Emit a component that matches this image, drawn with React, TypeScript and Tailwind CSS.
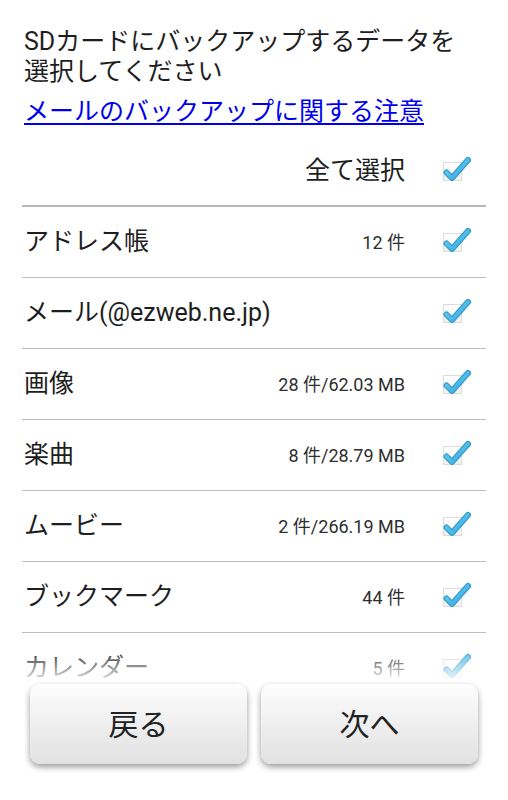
import React from 'react';

type Item = { label: string; count?: string };

const items: Item[] = [
  { label: 'アドレス帳', count: '12 件' },
  { label: 'メール(@ezweb.ne.jp)' },
  { label: '画像', count: '28 件/62.03 MB' },
  { label: '楽曲', count: '8 件/28.79 MB' },
  { label: 'ムービー', count: '2 件/266.19 MB' },
  { label: 'ブックマーク', count: '44 件' },
  { label: 'カレンダー', count: '5 件' },
];

// holo style checked box
const CheckBox: React.FC = () => (
  <svg width="36" height="32" viewBox="0 0 36 32" className="shrink-0">
    <defs>
      <linearGradient id="boxFill" x1="0" y1="0" x2="0" y2="1">
        <stop offset="0" stopColor="#ffffff" />
        <stop offset="1" stopColor="#f1f1f1" />
      </linearGradient>
      <linearGradient id="tick" x1="0" y1="0" x2="1" y2="1">
        <stop offset="0" stopColor="#72d2f4" />
        <stop offset="1" stopColor="#2ea6dc" />
      </linearGradient>
    </defs>
    <rect x="7.5" y="7.5" width="18" height="18" fill="url(#boxFill)" stroke="#dcdcdc" strokeWidth="1" />
    <path d="M10.5 17.5 L16 23 L32 5" fill="none" stroke="#1d8fc4" strokeWidth="6" strokeLinecap="round" strokeLinejoin="round" opacity="0.9" />
    <path d="M10.5 17.5 L16 23 L32 5" fill="none" stroke="url(#tick)" strokeWidth="3.6" strokeLinecap="round" strokeLinejoin="round" />
  </svg>
);

export default function App() {
  return (
    <div
      className="relative w-[508px] h-[800px] overflow-hidden bg-white text-[#1e1e1e]"
      style={{ fontFamily: 'Roboto, "Noto Sans CJK JP", sans-serif' }}
    >
      {/* Intro text */}
      <div className="px-6 pt-[27px]">
        <p className="text-[25px] leading-[30px]">
          SDカードにバックアップするデータを
          <br />
          選択してください
        </p>
        <a href="#" className="block mt-[10px] text-[25px] leading-[30px] text-[#0000ee] underline underline-offset-[3px]">
          メールのバックアップに関する注意
        </a>
      </div>

      {/* List */}
      <div className="mx-[22px] mt-[10px]">
        <div className="flex items-center h-[70px] border-b-2 border-[#b8b8b8]">
          <span className="flex-1 text-right text-[25px]">全て選択</span>
          <span className="ml-[31px] mr-[14px]"><CheckBox /></span>
        </div>
        {items.map((item) => (
          <div key={item.label} className="flex items-center h-[71px] border-b border-[#bdbdbd] pl-[2px]">
            <span className="flex-1 text-[25px]">{item.label}</span>
            {item.count && <span className="text-[18px] text-[#2e2e2e]">{item.count}</span>}
            <span className="ml-[31px] mr-[14px]"><CheckBox /></span>
          </div>
        ))}
      </div>

      {/* Bottom buttons, over the faded list */}
      <div className="absolute bottom-0 inset-x-0">
        <div className="h-[36px] bg-linear-to-b from-white/0 to-white" />
        <div className="bg-white h-[116px] px-[30px] flex gap-[14px]">
          <button className="flex-1 h-[80px] rounded-[10px] bg-linear-to-b from-[#fdfdfd] to-[#e1e1e1] shadow-[0_3px_6px_rgba(0,0,0,0.4)] text-[30px] text-[#222]">
            戻る
          </button>
          <button className="flex-1 h-[80px] rounded-[10px] bg-linear-to-b from-[#fdfdfd] to-[#e1e1e1] shadow-[0_3px_6px_rgba(0,0,0,0.4)] text-[30px] text-[#222]">
            次へ
          </button>
        </div>
      </div>
    </div>
  );
}
